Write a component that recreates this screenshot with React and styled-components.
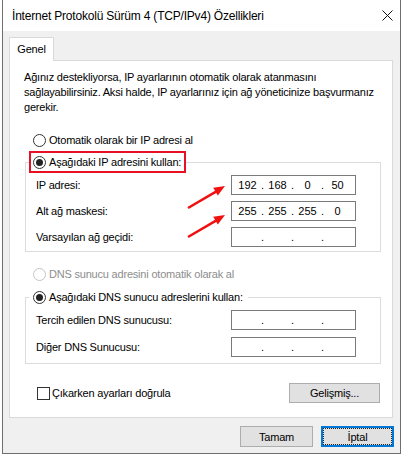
import React from 'react';
import styled, { createGlobalStyle } from 'styled-components';

const Global = createGlobalStyle`
  html, body { margin: 0; padding: 0; background: #fff; }
  body {
    font-family: "Liberation Sans", Arial, sans-serif;
    font-size: 11px;
    letter-spacing: -0.2px;
    color: #000;
  }
  #root { padding-left: 2px; }
`;

const Window = styled.div`
  position: relative;
  width: 399px;
  box-sizing: border-box;
  border: 1px solid #6f6f6f;
  border-top: none;
  background: #f0f0f0;
`;

const TitleBar = styled.div`
  height: 31px;
  background: #fff;
  display: flex;
  align-items: center;
  padding-left: 9px;
  font-size: 12px;
`;

const Title = styled.div`
  flex: 1;
`;

const Close = styled.div`
  width: 26px;
  height: 31px;
  display: flex;
  align-items: center;
  justify-content: center;
`;

const Body = styled.div`
  padding: 6px 7px 6px 6px;
`;

const Tabs = styled.div`
  display: flex;
`;

const Tab = styled.div`
  width: 45px;
  height: 24px;
  box-sizing: border-box;
  border: 1px solid #d9d9d9;
  border-bottom: none;
  background: #fff;
  margin-bottom: -1px;
  position: relative;
  z-index: 1;
  display: flex;
  align-items: center;
  justify-content: center;
  padding-bottom: 1px;
`;

const Panel = styled.div`
  height: 358px;
  box-sizing: border-box;
  border: 1px solid #d9d9d9;
  background: #fff;
  padding: 9px 11px 13px 15px;
  display: flex;
  flex-direction: column;
`;

const Intro = styled.p`
  margin: 0 0 0 -1px;
  line-height: 15px;
`;

const RadioRow = styled.div`
  display: flex;
  align-items: center;
  gap: 3px;
  height: 20px;
  margin-left: 8px;
  margin-top: ${p => p.$top}px;
  color: ${p => (p.$disabled ? '#8d8d8d' : '#000')};
`;

const RadioCircle = styled.span`
  width: 13px;
  height: 13px;
  box-sizing: border-box;
  border-radius: 50%;
  border: 1px solid ${p => (p.$disabled ? '#c4c4c4' : '#333')};
  background: #fff;
  display: flex;
  align-items: center;
  justify-content: center;
  flex: none;
  &::after {
    content: '';
    display: ${p => (p.$checked ? 'block' : 'none')};
    width: 7px;
    height: 7px;
    border-radius: 50%;
    background: #222;
  }
`;

const Group = styled.fieldset`
  margin: ${p => p.$top}px 0 0;
  padding: 0;
  border: 1px solid #dcdcdc;
  min-width: 0;
`;

const Legend = styled.legend`
  display: flex;
  align-items: center;
  gap: 3px;
  height: 22px;
  box-sizing: border-box;
  border: 2px solid ${p => (p.$highlight ? '#e81123' : 'transparent')};
  padding: 0 3px 0 2px;
  margin-left: 3px;
`;

const Rows = styled.div`
  display: flex;
  flex-direction: column;
  gap: ${p => p.$gap}px;
  padding: 2px 24px ${p => p.$bottom}px 10px;
`;

const FieldRow = styled.div`
  display: grid;
  grid-template-columns: 195px 125px;
  align-items: center;
  height: 20px;
`;

const IpBox = styled.div`
  width: 125px;
  height: 20px;
  box-sizing: border-box;
  border: 1px solid #7a7a7a;
  background: #fff;
  display: flex;
  align-items: center;
  padding-left: 3px;
  letter-spacing: 0;
`;

const Octet = styled.span`
  width: 25px;
  text-align: center;
`;

const Dot = styled.span`
  width: 5px;
  text-align: center;
`;

const BottomRow = styled.div`
  display: flex;
  align-items: center;
  justify-content: space-between;
  height: 20px;
  margin-top: 19px;
  padding-left: 12px;
  margin-right: 1px;
`;

const CheckLabel = styled.label`
  display: flex;
  align-items: center;
  gap: 2px;
`;

const CheckBox = styled.span`
  width: 13px;
  height: 13px;
  box-sizing: border-box;
  border: 1px solid #333;
  background: #fff;
`;

const Button = styled.div`
  position: relative;
  width: ${p => p.$w}px;
  height: ${p => p.$h}px;
  box-sizing: border-box;
  background: #e1e1e1;
  border: ${p => (p.$focused ? '2px solid #0078d7' : '1px solid #adadad')};
  display: flex;
  align-items: center;
  justify-content: center;
  &::after {
    content: '';
    display: ${p => (p.$focused ? 'block' : 'none')};
    position: absolute;
    inset: 0;
    border: 1px dotted #222;
  }
`;

const Footer = styled.div`
  display: flex;
  justify-content: flex-end;
  gap: 8px;
  margin-top: 8px;
  margin-right: -1px;
`;

const Arrows = styled.svg`
  position: absolute;
  left: 0;
  top: 0;
  pointer-events: none;
`;

function Radio({ checked, disabled }) {
  return <RadioCircle $checked={checked} $disabled={disabled} />;
}

function IpField({ parts = ['', '', '', ''] }) {
  return (
    <IpBox>
      <Octet>{parts[0]}</Octet>
      <Dot>.</Dot>
      <Octet>{parts[1]}</Octet>
      <Dot>.</Dot>
      <Octet>{parts[2]}</Octet>
      <Dot>.</Dot>
      <Octet>{parts[3]}</Octet>
    </IpBox>
  );
}

export default function App() {
  return (
    <>
      <Global />
      <Window>
        <TitleBar>
          <Title>İnternet Protokolü Sürüm 4 (TCP/IPv4) Özellikleri</Title>
          <Close>
            <svg width="11" height="11" viewBox="0 0 11 11">
              <path d="M0.5 0.5 L10.5 10.5 M10.5 0.5 L0.5 10.5" stroke="#111" strokeWidth="1" />
            </svg>
          </Close>
        </TitleBar>
        <Body>
          <Tabs>
            <Tab>Genel</Tab>
          </Tabs>
          <Panel>
            <Intro>
              Ağınız destekliyorsa, IP ayarlarının otomatik olarak atanmasını
              <br />
              sağlayabilirsiniz. Aksi halde, IP ayarlarınız için ağ yöneticinize başvurmanız
              <br />
              gerekir.
            </Intro>
            <RadioRow $top={15}>
              <Radio />
              Otomatik olarak bir IP adresi al
            </RadioRow>
            <Group $top={1}>
              <Legend $highlight>
                <Radio checked />
                Aşağıdaki IP adresini kullan:
              </Legend>
              <Rows $gap={6} $bottom={4}>
                <FieldRow>
                  <span>IP adresi:</span>
                  <IpField parts={['192', '168', '0', '50']} />
                </FieldRow>
                <FieldRow>
                  <span>Alt ağ maskesi:</span>
                  <IpField parts={['255', '255', '255', '0']} />
                </FieldRow>
                <FieldRow>
                  <span>Varsayılan ağ geçidi:</span>
                  <IpField />
                </FieldRow>
              </Rows>
            </Group>
            <RadioRow $top={12} $disabled>
              <Radio disabled />
              DNS sunucu adresini otomatik olarak al
            </RadioRow>
            <Group $top={2}>
              <Legend>
                <Radio checked />
                Aşağıdaki DNS sunucu adreslerini kullan:
              </Legend>
              <Rows $gap={7} $bottom={6}>
                <FieldRow>
                  <span>Tercih edilen DNS sunucusu:</span>
                  <IpField />
                </FieldRow>
                <FieldRow>
                  <span>Diğer DNS Sunucusu:</span>
                  <IpField />
                </FieldRow>
              </Rows>
            </Group>
            <BottomRow>
              <CheckLabel>
                <CheckBox />
                Çıkarken ayarları doğrula
              </CheckLabel>
              <Button $w={91} $h={20}>Gelişmiş...</Button>
            </BottomRow>
          </Panel>
          <Footer>
            <Button $w={73} $h={21}>Tamam</Button>
            <Button $w={73} $h={21} $focused>İptal</Button>
          </Footer>
        </Body>
        <Arrows width="397" height="454" viewBox="0 0 397 454">
          <line x1="185" y1="208" x2="213" y2="191.6" stroke="#f01010" strokeWidth="2.5" />
          <polygon points="222,186 214.8,195.5 210.2,187.8" fill="#f01010" />
          <line x1="185" y1="237" x2="213" y2="220.6" stroke="#f01010" strokeWidth="2.5" />
          <polygon points="222,215 214.8,224.5 210.2,216.8" fill="#f01010" />
        </Arrows>
      </Window>
    </>
  );
}
